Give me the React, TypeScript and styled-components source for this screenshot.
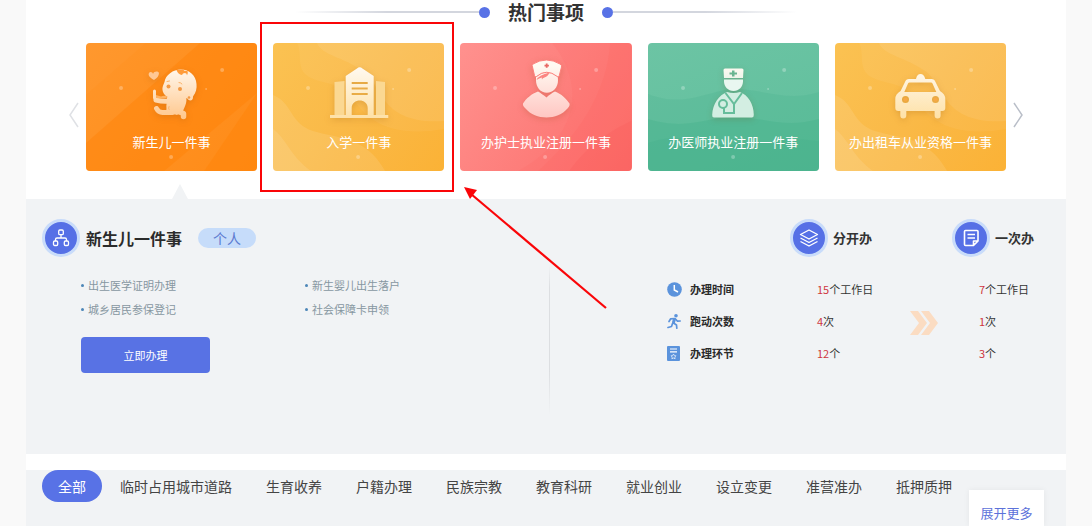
import React from "react";
import styled, { createGlobalStyle } from "styled-components";

const GlobalStyle = createGlobalStyle`
  * { box-sizing: border-box; }
  body {
    margin: 0;
    background: #f9f9f9;
    color: #333;
    font-family: "Noto Sans CJK SC", "Liberation Sans", sans-serif;
  }
  button { font-family: inherit; border: 0; padding: 0; background: none; cursor: pointer; }
  svg { display: block; }
`;

const Page = styled.main`
  display: flex;
  flex-direction: column;
  min-height: 100vh;
  margin: 0 26px;
  background: #fff;
`;

const Heading = styled.header`
  display: flex;
  align-items: center;
  justify-content: center;
  height: 24px;
  margin-bottom: 19px;
`;

const HeadingText = styled.h2`
  margin: 0 18px;
  font-size: 19px;
  line-height: 24px;
  font-weight: 700;
`;

const Line = styled.span<{ $to: "left" | "right" }>`
  width: 184px;
  height: 2px;
  background: linear-gradient(to ${(p) => p.$to}, #d3d6de 50%, #fff);
`;

const Dot = styled.span`
  width: 11px;
  height: 11px;
  border-radius: 50%;
  background: #5872e6;
`;

const Carousel = styled.section`
  display: grid;
  grid-template-columns: 60px 1fr 60px;
  align-items: center;
`;

const ArrowButton = styled.button<{ $side: "left" | "right" }>`
  display: flex;
  justify-content: ${(p) => (p.$side === "left" ? "flex-end" : "flex-start")};
  padding: 16px 7px 0;
  color: ${(p) => (p.$side === "left" ? "#dfe1e5" : "#b9bec8")};
`;

const Cards = styled.div`
  display: grid;
  grid-template-columns: repeat(5, 1fr);
  gap: 16px;
`;

const CardSlot = styled.div`
  position: relative;
`;

const Card = styled.button<{ $bg: string }>`
  position: relative;
  display: flex;
  flex-direction: column;
  align-items: center;
  width: 100%;
  height: 128px;
  padding-top: 17px;
  overflow: hidden;
  border-radius: 4px;
  background: ${(p) => p.$bg};
  color: #fff;
`;

const Pattern = styled.svg`
  position: absolute;
  inset: 0;
  width: 100%;
  height: 100%;
`;

const Art = styled.svg`
  position: relative;
  width: 80px;
  height: 60px;
  overflow: visible;
  filter: drop-shadow(0 2px 3px rgba(120, 60, 0, 0.18));
`;

const CardLabel = styled.span`
  position: relative;
  margin-top: 12px;
  font-size: 13px;
  line-height: 20px;
  white-space: nowrap;
`;

const Highlight = styled.div`
  position: absolute;
  inset: -21px -10px -21px -13px;
  border: 2px solid #fa0508;
  pointer-events: none;
`;

const Pointer = styled.svg`
  position: absolute;
  z-index: 1;
  top: 143px;
  left: calc(100% + 19px);
  pointer-events: none;
`;

const CaretRow = styled.div`
  display: flex;
  align-items: flex-end;
  height: 28px;
  padding-left: 146px;
`;

const Panel = styled.section`
  display: flex;
  padding: 20px 10px 39px 16px;
  background: #f1f3f5;
`;

const Half = styled.div<{ $end?: boolean }>`
  display: flex;
  flex: 1 1 0;
  flex-direction: column;
  align-items: ${(p) => (p.$end ? "flex-end" : "stretch")};
`;

const Divider = styled.div`
  width: 1px;
  height: 150px;
  margin-top: 46px;
  background: linear-gradient(#f1f3f5, #dcdee1 15%, #dcdee1 70%, #f1f3f5);
`;

const TitleRow = styled.div`
  display: flex;
  align-items: center;
  height: 38px;
`;

const IconBadge = styled.span`
  display: flex;
  align-items: center;
  justify-content: center;
  flex: none;
  width: 38px;
  height: 38px;
  border: 3px solid #c9dcfa;
  border-radius: 50%;
  background: #5670e6;
  color: #fff;
`;

const Title = styled.h3`
  margin: 0 16px 0 6px;
  font-size: 16px;
  line-height: 24px;
  font-weight: 700;
  color: #2b2b2b;
`;

const Tag = styled.span`
  padding: 0 15px;
  border-radius: 10px;
  background: #c6dcfa;
  color: #5c7ad0;
  font-size: 14px;
  line-height: 20px;
`;

const ItemList = styled.ul`
  display: grid;
  grid-template-columns: 224px 1fr;
  margin: 16px 0;
  padding: 0 0 0 39px;
  list-style: none;
`;

const Item = styled.li`
  display: flex;
  align-items: center;
  gap: 4px;
  color: #8797a1;
  font-size: 11px;
  line-height: 24px;

  &::before {
    content: "";
    width: 3px;
    height: 3px;
    border-radius: 50%;
    background: #4c86b8;
  }
`;

const PrimaryButton = styled.button`
  width: 129px;
  height: 36px;
  margin-left: 39px;
  border-radius: 4px;
  background: #5872e4;
  color: #fff;
  font-size: 11px;
`;

const Compare = styled.table`
  width: 389px;
  border-collapse: collapse;
  table-layout: fixed;
  font-size: 11px;
  line-height: 16px;

  td, th { padding: 0; text-align: left; }
  tbody tr { height: 32px; }
`;

const HeadCell = styled.th`
  height: 54px;
  vertical-align: top;
`;

const HeadLabel = styled.div`
  display: flex;
  align-items: center;
  gap: 5px;
  font-size: 13px;
  font-weight: 700;
`;

const RowLabel = styled.div`
  display: flex;
  align-items: center;
  gap: 8px;
  font-weight: 700;
  color: #2b2b2b;
`;

const Value = styled.div`
  padding-left: 27px;

  b { color: #cf3640; font-weight: 400; }
`;

const Filters = styled.nav`
  position: relative;
  flex: 1;
  margin-top: 16px;
  padding: 0 16px 24px;
  background: #f1f3f5;
`;

const TabRow = styled.div`
  display: flex;
  gap: 2px;
  padding-right: 80px;
`;

const Tab = styled.button<{ $active?: boolean }>`
  height: 32px;
  padding: 0 16px;
  border-radius: 16px;
  background: ${(p) => (p.$active ? "#5872e6" : "transparent")};
  color: ${(p) => (p.$active ? "#fff" : "#444")};
  font-size: 14px;
  white-space: nowrap;
`;

const MoreButton = styled.button`
  position: absolute;
  top: 20px;
  right: 22px;
  bottom: 0;
  width: 75px;
  padding-top: 8px;
  background: #fff;
  box-shadow: 0 0 6px rgba(0, 0, 0, 0.06);
  color: #5c72da;
  font-size: 13px;
`;

const Sparkles = () => (
  <g fill="#fff" fillOpacity="0.28">
    <circle cx="35" cy="45" r="2" />
    <circle cx="136" cy="27" r="2" />
    <circle cx="120" cy="46" r="1" />
    <circle cx="85" cy="114" r="2" />
  </g>
);

const ArtFill = ({ id, tint }: { id: string; tint: string }) => (
  <defs>
    <linearGradient id={id} gradientUnits="userSpaceOnUse" x1="0" y1="6" x2="0" y2="60">
      <stop offset="0" stopColor="#fffaf2" />
      <stop offset="1" stopColor={tint} />
    </linearGradient>
  </defs>
);

const BabyArt = () => (
  <Art viewBox="0 0 80 60">
    <ArtFill id="baby" tint="#ffc68a" />
    <path d="M22 20c-5-3-6-5-5-7 1-2 4-1 4 1 1-3 5-3 6-1 0 3-2 5-5 7z" fill="#ffc894" />
    <path
      fill="url(#baby)"
      d="M49 9.500C41 9.500 33.500 15 32.500 22c-1 3-2.500 5-2 8 .5 5 6 9 12 9.500 5 .5 10 0 12.500-1.500 1.500 3.500 6.500 3.500 6-1.500 3-4 4-8 3.500-12.500C64 15 57 9.500 49 9.500z"
    />
    <path d="M44.500 10q1.500 4.500 5.500 5 .5-2 3-2 2 0 2 2.500 1.500-2 .5-4.500-3 .5-4.500-1.500z" fill="#ff9c3a" />
    <path fill="url(#baby)" d="M35 37h19c1.500 5-1 9-3 14l-6 4-11-3c1-4 0-5 .5-7.500z" />
    <g fill="none" stroke="url(#baby)" strokeLinecap="round" strokeLinejoin="round">
      <path d="M38 41q-7 1-14-1" strokeWidth="5" />
      <path d="M22.500 31v7" strokeWidth="3" />
      <path d="M24.500 48.500q2 4 6 4h10" strokeWidth="5" />
      <path d="M45 51l6.500 2.500v3" strokeWidth="5.500" />
    </g>
    <path d="M24 35l5 1.500q4-1.500 7 .500-3 2-6 1-3 1-6-.5z" fill="#ffb261" />
    <g fill="#f39a45">
      <circle cx="36.500" cy="26.500" r="2" />
      <circle cx="48" cy="29" r="2" />
      <circle cx="57" cy="37.500" r="1.300" />
    </g>
    <path
      d="M35 21.500l2.500-.5M47 22.500q2 0 3 1.500M37 46.500q-1 2 0 3"
      fill="none"
      stroke="#fbb268"
      strokeWidth="1"
      strokeLinecap="round"
    />
  </Art>
);

const SchoolArt = () => (
  <Art viewBox="0 0 80 60">
    <ArtFill id="school" tint="#fee0a4" />
    <path d="M15.500 22l10-1v35h-10zM57 21l9 1v34h-9z" fill="#fbd892" />
    <path
      fill="url(#school)"
      fillRule="evenodd"
      d="M11 55h15.700V16L38 8.500q2.700-2.500 5.400 0L54.700 16v39H69.300v3H11zM32.700 55h16v-7c0-10-16-10-16 0zM32.700 22h16v2h-16zM32.700 27.500h16v2h-16zM32.700 33h16v2h-16z"
    />
  </Art>
);

const NurseArt = () => (
  <Art viewBox="0 0 80 60">
    <ArtFill id="nurse" tint="#ffc4c0" />
    <path
      fill="url(#nurse)"
      d="M30 17Q40.500 8 51.500 16q.5 2 .5 4.500c0 7-5 12.200-11.200 12.200S30 27.500 30 20z"
    />
    <path
      fill="url(#nurse)"
      stroke="#fc807c"
      strokeWidth="1"
      d="M26.500 7q-1-2 .5-3Q40.500-4 54 4q2 1 1.500 3l-2.200 8.500q-.5 2-2 1Q40.500 8 30.500 16.500q-1.500 1-2-1z"
    />
    <path d="M38.500 4.700h1.300V3.400h1.800v1.300h1.300v1.800h-1.300v1.300h-1.800V6.500h-1.300z" fill="#e86a66" />
    <path d="M30.500 20q2-5 13-7.500-1.500 4-5 5-2 .5-2.500 2-.5-1 0-2-3 .5-5.500 2.500z" fill="#fb8581" />
    <path
      fill="url(#nurse)"
      d="M32 31.500c2 1 6 4 8.500 6 2-2 6-5 8.500-6 6 2 12 8 14.500 12 .5 2-.5 3.500-2 5-10 12-32 12-42 0-1.500-1.500-3-3-2.500-5 3-5 9-10 15-12z"
    />
  </Art>
);

const DoctorArt = () => (
  <Art viewBox="0 0 80 60">
    <ArtFill id="doctor" tint="#b4e0cf" />
    <path
      fill="url(#doctor)"
      fillRule="evenodd"
      d="M32 8.500h17q1.500 0 1.500 1.500l-.5 8H31l-.5-8q0-1.500 1.500-1.500zM39 10.500v2h-2.500v2H39v2h2.500v-2H44v-2h-2.500v-2z"
    />
    <path d="M31 19.500h19v2c0 5-4 9.500-9.500 9.500S31 26.500 31 21.500z" fill="#e9f7f0" />
    <path
      d="M34 32q6.500 2 13 0c8 3 13.800 12 13.800 23q0 2.500-2 2.500H21q-2 0-1.800-2.500C19.500 44 26 35 34 32z"
      fill="#d3eee2"
    />
    <g fill="none" stroke="#66bd9b" strokeWidth="2">
      <path d="M32.500 33L41 44l8-11M41 43v10H31v-5" />
      <circle cx="30" cy="44" r="4" />
    </g>
  </Art>
);

const TaxiArt = () => (
  <Art viewBox="0 0 80 60">
    <ArtFill id="taxi" tint="#fee0a4" />
    <path
      fill="url(#taxi)"
      fillRule="evenodd"
      d="M36 19q1-5 4.500-5t4.800 5h6.200q3 0 4 3l4.500 9q5.300 3 5.300 8v9q0 3-3 3h-1.700v4.500q0 3-3 3t-3-3V51H26.300v4.500q0 3-3 3t-3-3V51h-2q-3 0-3-3v-9q0-5 5.300-8l4.400-9q1-3 4-3zM29.500 22.500q-1 0-1.500 1l-3.700 8.500h32L52.500 23.500q-.5-1-1.500-1zM25.500 36a3.500 3.500 0 100 7 3.500 3.500 0 000-7zM55.500 36a3.500 3.500 0 100 7 3.500 3.500 0 000-7z"
    />
    <circle cx="25.500" cy="39.500" r="2" fill="#f7a845" />
    <circle cx="55.500" cy="39.500" r="2" fill="#f7a845" />
  </Art>
);

const AmberWaves = () => (
  <g fill="#fff">
    <path d="M24 0c6 10-2 26 12 34s32 4 44 22 34 40 91 30V0z" fillOpacity="0.05" />
    <path d="M44 0c4 12 26 14 46 28s16 54 81 50V0z" fillOpacity="0.08" />
    <path d="M0 52c20 8 16 28 40 36s52 4 72 40H0z" fillOpacity="0.1" />
    <path d="M0 86c12 8 18 28 38 42H0z" fillOpacity="0.1" />
  </g>
);

const amber = "linear-gradient(125deg, #fbc252, #fab947 50%, #fbb236)";

const cards = [
  {
    label: "新生儿一件事",
    bg: "linear-gradient(125deg, #ff962a, #ff8b17)",
    art: <BabyArt />,
    pattern: (
      <g>
        <path d="M114 0h57v50L78 128H0V100z" fill="#ff7e00" fillOpacity="0.35" />
        <path d="M171 50v78H118z" fill="#ff8204" fillOpacity="0.4" />
        <path d="M0 0h60L0 52z" fill="#fff" fillOpacity="0.02" />
      </g>
    ),
  },
  { label: "入学一件事", bg: amber, art: <SchoolArt />, pattern: <AmberWaves /> },
  {
    label: "办护士执业注册一件事",
    bg: "linear-gradient(125deg, #ff918e, #fd7c79 60%, #fc706d)",
    art: <NurseArt />,
    pattern: (
      <g fill="#fb5754">
        <path d="M92 0c38 48 20 98-34 128h113V0z" fillOpacity="0.1" />
        <path d="M150 0c-4 52-32 92-72 128h93V0z" fillOpacity="0.12" />
        <path d="M171 78c-18 8-44 24-62 50h62z" fillOpacity="0.2" />
      </g>
    ),
  },
  {
    label: "办医师执业注册一件事",
    bg: "linear-gradient(160deg, #6cc4a4, #60bf9c)",
    art: <DoctorArt />,
    pattern: (
      <g fill="#35aa80">
        <path d="M0 51c30 12 50 2 76-4s60 14 95 2v79H0z" fillOpacity="0.16" />
        <path d="M0 76c40 12 56-2 86-2s50 12 85 2v52H0z" fillOpacity="0.24" />
        <path d="M0 100c40-14 60 6 96 2s50-8 75-4v30H0z" fillOpacity="0.16" />
      </g>
    ),
  },
  { label: "办出租车从业资格一件事", bg: amber, art: <TaxiArt />, pattern: <AmberWaves /> },
];

const Chevron = ({ flip }: { flip?: boolean }) => (
  <svg width="10" height="26" viewBox="0 0 10 26" fill="none" stroke="currentColor" strokeWidth="1.500">
    <path d={flip ? "M1 1l8 12-8 12" : "M9 1L1 13l8 12"} />
  </svg>
);

const OrgIcon = () => (
  <svg width="18" height="18" viewBox="0 0 18 18" fill="none" stroke="currentColor" strokeWidth="1.300">
    <rect x="6.700" y="1" width="4.600" height="4.600" rx="1.200" />
    <rect x="1.500" y="12" width="4.200" height="4.500" rx="1.200" />
    <rect x="12.300" y="12" width="4.200" height="4.500" rx="1.200" />
    <path d="M9 5.600V9M3.500 12v-1.500Q3.500 9 5 9h8q1.500 0 1.500 1.500V12" />
  </svg>
);

const LayersIcon = () => (
  <svg width="20" height="20" viewBox="0 0 20 20" fill="none" stroke="currentColor" strokeWidth="1.400" strokeLinejoin="round">
    <path d="M10 2l8.500 4.500L10 11 1.500 6.500zM1.500 10l8.500 4.500 8.500-4.500M1.500 13.500L10 18l8.500-4.500" />
  </svg>
);

const NoteIcon = () => (
  <svg width="18" height="18" viewBox="0 0 18 18" fill="none" stroke="currentColor" strokeWidth="1.600" strokeLinejoin="round">
    <path d="M3.500 1.500h11.500q1 0 1 1V12l-4.500 4.500h-8q-1 0-1-1v-13q0-1 1-1zM11.500 16.500V12H16M5.500 5.500h7.500M5.500 9h7.500" />
  </svg>
);

const ClockIcon = () => (
  <svg width="15" height="15" viewBox="0 0 15 15">
    <circle cx="7.500" cy="7.500" r="7.300" fill="#5b93dc" />
    <path d="M7.300 3v5l3.700 2" fill="none" stroke="#fff" strokeWidth="1.500" />
  </svg>
);

const RunIcon = () => (
  <svg width="15" height="15" viewBox="0 0 15 15" fill="none" stroke="#5b93dc" strokeWidth="1.700" strokeLinecap="round" strokeLinejoin="round">
    <circle cx="9" cy="1.800" r="1.800" fill="#5b93dc" stroke="none" />
    <path d="M2 7.500l1.700-2.700 4-.3M6.500 9l3 2 .3 3.200M5.500 9.500L4.500 12.500 1 13.500M8.500 5l2 2.200 2.700-.2" />
    <path d="M7.300 5.700L6.500 8.500" strokeWidth="3" />
  </svg>
);

const FormIcon = () => (
  <svg width="15" height="15" viewBox="0 0 15 15">
    <rect x="0" y="0" width="13" height="15" rx="1" fill="#5b93dc" />
    <path d="M3 3h7M3 5.800h7" stroke="#fff" strokeWidth="1.200" />
    <path d="M6.500 8l.8 1.600 1.700.2-1.200 1.200.3 1.800-1.600-.8-1.600.8.3-1.800L4 9.800l1.700-.2z" fill="none" stroke="#e4eefa" strokeWidth=".8" />
  </svg>
);

const DoubleArrow = () => (
  <svg width="28" height="27" viewBox="0 0 28 27" fill="#fbdcc2">
    <path d="M0 3h8l9 12-9 12H0l9-12zM11 3h8l9 12-9 12h-8l9-12z" />
  </svg>
);

const rows = [
  { icon: <ClockIcon />, label: "办理时间", before: ["15", "个工作日"], after: ["7", "个工作日"] },
  { icon: <RunIcon />, label: "跑动次数", before: ["4", "次"], after: ["1", "次"] },
  { icon: <FormIcon />, label: "办理环节", before: ["12", "个"], after: ["3", "个"] },
];

const items = ["出生医学证明办理", "新生婴儿出生落户", "城乡居民参保登记", "社会保障卡申领"];

const tabs = [
  "全部",
  "临时占用城市道路",
  "生育收养",
  "户籍办理",
  "民族宗教",
  "教育科研",
  "就业创业",
  "设立变更",
  "准营准办",
  "抵押质押",
];

export default function App() {
  return (
    <>
      <GlobalStyle />
      <Page>
        <Heading>
          <Line $to="left" />
          <Dot />
          <HeadingText>热门事项</HeadingText>
          <Dot />
          <Line $to="right" />
        </Heading>

        <Carousel>
          <ArrowButton $side="left" aria-label="上一组">
            <Chevron />
          </ArrowButton>
          <Cards>
            {cards.map((card, i) => (
              <CardSlot key={card.label}>
                <Card $bg={card.bg}>
                  <Pattern viewBox="0 0 171 128" preserveAspectRatio="xMidYMid slice">
                    {card.pattern}
                    <Sparkles />
                  </Pattern>
                  {card.art}
                  <CardLabel>{card.label}</CardLabel>
                </Card>
                {i === 1 && (
                  <>
                    <Highlight />
                    <Pointer width="145" height="124" viewBox="0 0 145 124">
                      <path d="M8 8L143 122" stroke="#fa0508" strokeWidth="2.200" />
                      <path d="M1 1L14 4 7 13z" fill="#fa0508" />
                    </Pointer>
                  </>
                )}
              </CardSlot>
            ))}
          </Cards>
          <ArrowButton $side="right" aria-label="下一组">
            <Chevron flip />
          </ArrowButton>
        </Carousel>
        <CaretRow>
          <svg width="16" height="15" viewBox="0 0 16 15">
            <path d="M8 0l8 15H0z" fill="#f1f3f5" />
          </svg>
        </CaretRow>

        <Panel>
          <Half>
            <TitleRow>
              <IconBadge>
                <OrgIcon />
              </IconBadge>
              <Title>新生儿一件事</Title>
              <Tag>个人</Tag>
            </TitleRow>
            <ItemList>
              {items.map((item) => (
                <Item key={item}>{item}</Item>
              ))}
            </ItemList>
            <PrimaryButton>立即办理</PrimaryButton>
          </Half>
          <Divider />
          <Half $end>
            <Compare>
              <colgroup>
                <col width="123" />
                <col width="120" />
                <col width="42" />
                <col width="104" />
              </colgroup>
              <thead>
                <tr>
                  <td />
                  <HeadCell scope="col">
                    <HeadLabel>
                      <IconBadge>
                        <LayersIcon />
                      </IconBadge>
                      分开办
                    </HeadLabel>
                  </HeadCell>
                  <td />
                  <HeadCell scope="col">
                    <HeadLabel>
                      <IconBadge>
                        <NoteIcon />
                      </IconBadge>
                      一次办
                    </HeadLabel>
                  </HeadCell>
                </tr>
              </thead>
              <tbody>
                {rows.map((row, i) => (
                  <tr key={row.label}>
                    <th scope="row">
                      <RowLabel>
                        {row.icon}
                        {row.label}
                      </RowLabel>
                    </th>
                    <td>
                      <Value>
                        <b>{row.before[0]}</b>
                        {row.before[1]}
                      </Value>
                    </td>
                    {i === 0 && (
                      <td rowSpan={3}>
                        <DoubleArrow />
                      </td>
                    )}
                    <td>
                      <Value>
                        <b>{row.after[0]}</b>
                        {row.after[1]}
                      </Value>
                    </td>
                  </tr>
                ))}
              </tbody>
            </Compare>
          </Half>
        </Panel>

        <Filters>
          <TabRow>
            {tabs.map((tab, i) => (
              <Tab key={tab} $active={i === 0}>
                {tab}
              </Tab>
            ))}
          </TabRow>
          <MoreButton>展开更多</MoreButton>
        </Filters>
      </Page>
    </>
  );
}
